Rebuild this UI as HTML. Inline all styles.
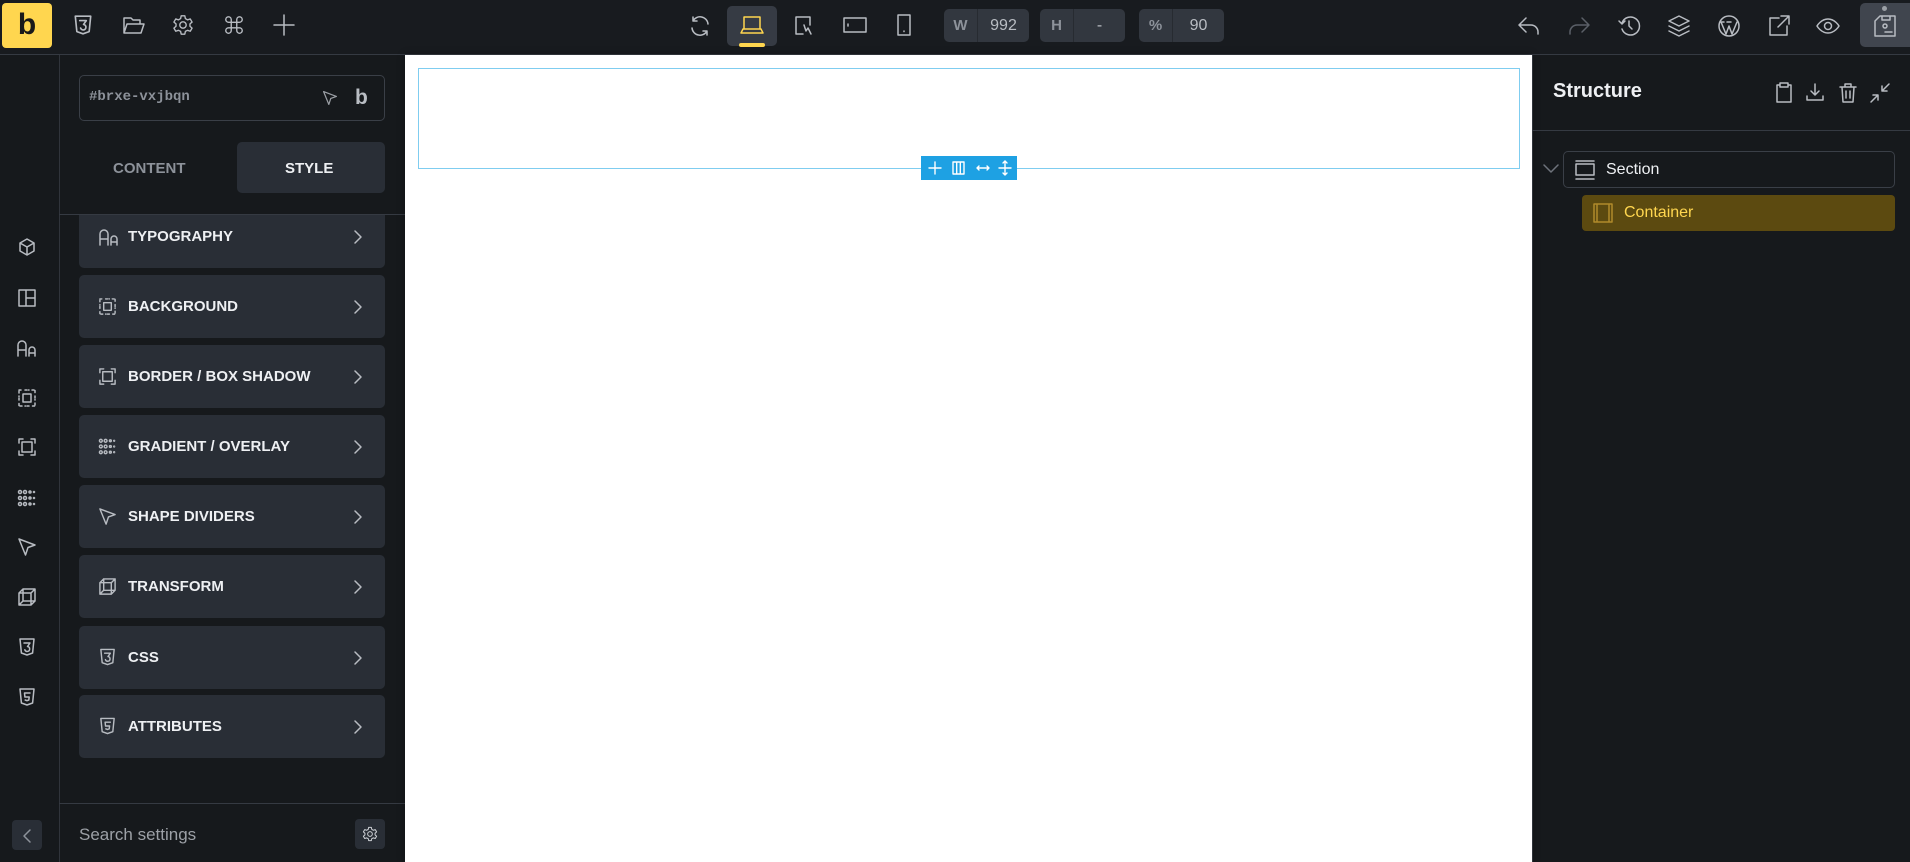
<!DOCTYPE html>
<html><head><meta charset="utf-8"><style>
*{box-sizing:border-box;margin:0;padding:0}
body{width:1910px;height:862px;overflow:hidden;background:#16191c;font-family:"Liberation Sans",sans-serif;position:relative}
.a{position:absolute}
svg.i{position:absolute;fill:none;stroke:#b8bcc2;stroke-width:1.5;stroke-linecap:round;stroke-linejoin:round}
.top{left:0;top:0;width:1910px;height:55px;background:#181b1f;border-bottom:1px solid #353a42}
.item{position:absolute;left:79px;width:306px;height:63px;background:#292e36;border-radius:5px}
.item span{position:absolute;left:49px;top:23px;color:#eef0f3;font-weight:bold;font-size:15px}
.item svg{position:absolute}
.chev{right:22px;top:24px}
.box{position:absolute;background:#32373f;border-radius:5px;height:33px;top:9px}
.box b{position:absolute;left:0;top:0;width:34px;height:33px;border-right:1px solid #272b31;color:#8d929a;font-size:15px;text-align:center;line-height:33px}
.box i{position:absolute;left:34px;right:0;top:0;height:33px;color:#b9bdc3;font-style:normal;font-size:16px;text-align:center;line-height:33px}
</style></head><body>
<svg width="0" height="0" style="position:absolute">
<defs>
<symbol id="css" viewBox="0 0 20 20"><path d="M3 2h14l-1.4 14L10 18l-5.6-2z M7 6h6l-2.5 3.5a2.5 2.5 0 1 1-2.7 3.3"/></symbol>
<symbol id="h5" viewBox="0 0 20 20"><path d="M3 2h14l-1.4 14L10 18l-5.6-2z M13 6H7.5l.4 4h4.3l-.4 3-1.8.7-1.8-.7"/></symbol>
<symbol id="chev" viewBox="0 0 10 16"><path d="M2 2l6 6-6 6"/></symbol>
<symbol id="typo" viewBox="0 0 22 20"><path d="M2 18V7a4 4 0 0 1 8 0v11M2 12h8M13 18v-6a3 3 0 0 1 6 0v6M13 15h6"/></symbol>
<symbol id="bg" viewBox="0 0 20 20"><path d="M6 6h8v8H6z" /><path d="M2 2h3M8 2h4M15 2h3v3M18 8v4M18 15v3h-3M12 18H8M5 18H2v-3M2 12V8M2 5V2" stroke-dasharray="2 1.5"/></symbol>
<symbol id="border" viewBox="0 0 20 20"><path d="M5 5h10v10H5zM2 6V2h4M14 2h4v4M18 14v4h-4M6 18H2v-4"/></symbol>
<symbol id="grad" viewBox="0 0 20 20"><circle cx="3" cy="4" r="1.5"/><circle cx="8" cy="4" r="1.5"/><circle cx="13" cy="4" r="1"/><circle cx="17" cy="4" r=".5"/><circle cx="3" cy="10" r="1.5"/><circle cx="8" cy="10" r="1.5"/><circle cx="13" cy="10" r="1"/><circle cx="17" cy="10" r=".5"/><circle cx="3" cy="16" r="1.5"/><circle cx="8" cy="16" r="1.5"/><circle cx="13" cy="16" r="1"/><circle cx="17" cy="16" r=".5"/></symbol>
<symbol id="ptr" viewBox="0 0 20 20"><path d="M2 2l16 6-7 2.5L8.5 18z"/></symbol>
<symbol id="cube" viewBox="0 0 20 20"><path d="M2 6h12v12H2zM6 2h12v12H6zM2 6l4-4M14 6l4-4M14 18l4-4M2 18l4-4"/></symbol>
<symbol id="box3d" viewBox="0 0 20 20"><path d="M10 2l7 4v8l-7 4-7-4V6zM3 6l7 4 7-4M10 10v8"/></symbol>
<symbol id="layout" viewBox="0 0 20 20"><path d="M2 2h16v16H2zM9 2v16M9 10h9"/></symbol>
</defs></svg>

<div class="a top"></div>
<div class="a" style="left:2px;top:3px;width:50px;height:45px;background:#ffd64f;border-radius:4px;color:#1a1a1a;font-weight:bold;font-size:30px;text-align:center;line-height:44px">b</div>
<svg class="i" style="left:72px;top:14px" width="22" height="22"><use href="#css"/></svg>
<svg class="i" style="left:122px;top:14px" width="24" height="22" viewBox="0 0 24 22"><path d="M2 19V4h7l2 2h7v4M2 19l3-9h17l-3 9z"/></svg>
<svg class="i" style="left:172px;top:14px" width="22" height="22" viewBox="0 0 24 24"><circle cx="12" cy="12" r="3.5"/><path d="M10 2h4l.6 3 2.4 1.4 2.9-1 2 3.4-2.3 2v2.6l2.3 2-2 3.4-2.9-1L14.6 19 14 22h-4l-.6-3L7 17.8l-2.9 1-2-3.4 2.3-2v-2.6l-2.3-2 2-3.4 2.9 1L9.4 5z"/></svg>
<svg class="i" style="left:223px;top:14px" width="22" height="22" viewBox="0 0 24 24"><path d="M9 9h6v6H9zM9 9V6a3 3 0 1 0-3 3zM15 9V6a3 3 0 1 1 3 3zM9 15v3a3 3 0 1 1-3-3zM15 15v3a3 3 0 1 0 3-3z"/></svg>
<svg class="i" style="left:272px;top:13px" width="24" height="24"><path d="M12 2v20M2 12h20"/></svg>

<svg class="i" style="left:688px;top:14px" width="24" height="24" viewBox="0 0 24 24"><path d="M20 10A8 8 0 0 0 5 7M4 14a8 8 0 0 0 15 3M5 3v4h4M19 21v-4h-4"/></svg>
<div class="a" style="left:727px;top:6px;width:50px;height:40px;background:#363b44;border-radius:5px"></div>
<div class="a" style="left:739px;top:43px;width:26px;height:4px;background:#ffd64f;border-radius:2px"></div>
<svg class="i" style="left:740px;top:14px;stroke:#ffd64f" width="24" height="22" viewBox="0 0 24 22"><path d="M4 3h16v12H4zM1 19h22l-2-4H3z"/></svg>
<svg class="i" style="left:793px;top:14px" width="22" height="24" viewBox="0 0 22 24"><path d="M10 20H3V3h14v8M11 11l2 6 2-3 3 6" /></svg>
<svg class="i" style="left:842px;top:15px" width="26" height="20" viewBox="0 0 26 20"><path d="M2 3h22v14H2zM6 9v2"/></svg>
<svg class="i" style="left:896px;top:13px" width="16" height="24" viewBox="0 0 16 24"><path d="M2 2h12v20H2zM8 18v.5"/></svg>
<div class="box" style="left:944px;width:85px"><b>W</b><i>992</i></div>
<div class="box" style="left:1040px;width:85px"><b>H</b><i>-</i></div>
<div class="box" style="left:1139px;width:85px"><b>%</b><i>90</i></div>

<svg class="i" style="left:1517px;top:15px" width="24" height="22" viewBox="0 0 24 22"><path d="M9 3L2 10l7 7M2 10h12a7 7 0 0 1 7 7v2"/></svg>
<svg class="i" style="left:1567px;top:15px;stroke:#5b6068" width="24" height="22" viewBox="0 0 24 22"><path d="M15 3l7 7-7 7M22 10H10a7 7 0 0 0-7 7v2"/></svg>
<svg class="i" style="left:1617px;top:14px" width="24" height="24" viewBox="0 0 24 24"><path d="M5 9a9 9 0 1 1 0 6M2 7l3 3 3-3M12 7v5l3 3"/></svg>
<svg class="i" style="left:1667px;top:14px" width="24" height="24" viewBox="0 0 24 24"><path d="M12 2l10 5-10 5L2 7zM2 12l10 5 10-5M2 17l10 5 10-5"/></svg>
<svg class="i" style="left:1717px;top:14px" width="24" height="24" viewBox="0 0 24 24"><circle cx="12" cy="12" r="10"/><path d="M4 8l5 12 3-8 3 8 5-12M3 8h4M10 8h4"/></svg>
<svg class="i" style="left:1767px;top:14px" width="24" height="24" viewBox="0 0 24 24"><path d="M12 4H3v17h17v-9M14 2h8v8M22 2L11 13"/></svg>
<svg class="i" style="left:1816px;top:16px" width="24" height="20" viewBox="0 0 24 20"><path d="M1 10s4-7 11-7 11 7 11 7-4 7-11 7S1 10 1 10z"/><circle cx="12" cy="10" r="3.5"/></svg>
<div class="a" style="left:1860px;top:3px;width:50px;height:44px;background:#40454e;border-radius:5px 0 0 5px"></div>
<div class="a" style="left:1882px;top:6px;width:5px;height:5px;border-radius:50%;background:#9ca0a6"></div>
<svg class="i" style="left:1873px;top:15px" width="24" height="22" viewBox="0 0 24 22"><path d="M7 1h15v20H2V6zM9 1v4h8V1"/><circle cx="12" cy="11" r="2"/><path d="M12 17h7"/></svg>

<!-- left rail -->
<div class="a" style="left:59px;top:55px;width:1px;height:807px;background:#30343b"></div>
<svg class="i" style="left:17px;top:237px" width="20" height="20"><use href="#box3d"/></svg>
<svg class="i" style="left:17px;top:288px" width="20" height="20"><use href="#layout"/></svg>
<svg class="i" style="left:16px;top:338px" width="22" height="20"><use href="#typo"/></svg>
<svg class="i" style="left:17px;top:388px" width="20" height="20"><use href="#bg"/></svg>
<svg class="i" style="left:17px;top:437px" width="20" height="20"><use href="#border"/></svg>
<svg class="i" style="left:17px;top:488px" width="20" height="20"><use href="#grad"/></svg>
<svg class="i" style="left:17px;top:537px" width="20" height="20"><use href="#ptr"/></svg>
<svg class="i" style="left:17px;top:587px" width="20" height="20"><use href="#cube"/></svg>
<svg class="i" style="left:17px;top:637px" width="20" height="20"><use href="#css"/></svg>
<svg class="i" style="left:17px;top:687px" width="20" height="20"><use href="#h5"/></svg>
<div class="a" style="left:12px;top:820px;width:30px;height:30px;background:#292e36;border-radius:4px"></div>
<svg class="i" style="left:22px;top:828px;stroke:#8d929a" width="10" height="16"><path d="M8 2L2 8l6 6"/></svg>

<!-- settings panel -->
<div class="a" style="left:79px;top:75px;width:306px;height:46px;border:1px solid #3a3f47;border-radius:5px"></div>
<div class="a" style="left:89px;top:89px;color:#8d929a;font-family:'Liberation Mono',monospace;font-weight:bold;font-size:14px">#brxe-vxjbqn</div>
<svg class="i" style="left:322px;top:90px;stroke:#9ca0a6" width="16" height="16" viewBox="0 0 20 20"><path d="M2 2l16 6-7 2.5L8.5 18z"/></svg>
<div class="a" style="left:355px;top:86px;color:#b9bdc3;font-weight:bold;font-size:21px">b</div>
<div class="a" style="left:237px;top:142px;width:148px;height:51px;background:#292e36;border-radius:5px"></div>
<div class="a" style="left:113px;top:160px;color:#8d929a;font-weight:bold;font-size:15px">CONTENT</div>
<div class="a" style="left:285px;top:160px;color:#eef0f3;font-weight:bold;font-size:15px">STYLE</div>
<div class="a" style="left:59px;top:214px;width:346px;height:1px;background:#353a42"></div>
<div class="a" style="left:59px;top:215px;width:346px;height:588px;overflow:hidden">
 <div class="item" style="left:20px;top:-10px"><svg class="i" style="left:19px;top:22px" width="22" height="20"><use href="#typo"/></svg><span>TYPOGRAPHY</span><svg class="i chev" width="10" height="16"><use href="#chev"/></svg></div>
 <div class="item" style="left:20px;top:60px"><svg class="i" style="left:19px;top:22px" width="19" height="19"><use href="#bg"/></svg><span>BACKGROUND</span><svg class="i chev" width="10" height="16"><use href="#chev"/></svg></div>
 <div class="item" style="left:20px;top:130px"><svg class="i" style="left:19px;top:22px" width="19" height="19"><use href="#border"/></svg><span>BORDER / BOX SHADOW</span><svg class="i chev" width="10" height="16"><use href="#chev"/></svg></div>
 <div class="item" style="left:20px;top:200px"><svg class="i" style="left:19px;top:22px" width="19" height="19"><use href="#grad"/></svg><span>GRADIENT / OVERLAY</span><svg class="i chev" width="10" height="16"><use href="#chev"/></svg></div>
 <div class="item" style="left:20px;top:270px"><svg class="i" style="left:19px;top:22px" width="19" height="19"><use href="#ptr"/></svg><span>SHAPE DIVIDERS</span><svg class="i chev" width="10" height="16"><use href="#chev"/></svg></div>
 <div class="item" style="left:20px;top:340px"><svg class="i" style="left:19px;top:22px" width="19" height="19"><use href="#cube"/></svg><span>TRANSFORM</span><svg class="i chev" width="10" height="16"><use href="#chev"/></svg></div>
 <div class="item" style="left:20px;top:411px"><svg class="i" style="left:19px;top:21px" width="19" height="20"><use href="#css"/></svg><span>CSS</span><svg class="i chev" width="10" height="16"><use href="#chev"/></svg></div>
 <div class="item" style="left:20px;top:480px"><svg class="i" style="left:19px;top:21px" width="19" height="20"><use href="#h5"/></svg><span>ATTRIBUTES</span><svg class="i chev" width="10" height="16"><use href="#chev"/></svg></div>
</div>
<div class="a" style="left:59px;top:803px;width:346px;height:1px;background:#353a42"></div>
<div class="a" style="left:79px;top:825px;color:#9ca0a6;font-size:17px">Search settings</div>
<div class="a" style="left:355px;top:819px;width:30px;height:30px;background:#292e36;border-radius:4px"></div>
<svg class="i" style="left:362px;top:826px;stroke:#d0d3d8" width="16" height="16" viewBox="0 0 24 24"><circle cx="12" cy="12" r="3.5"/><path d="M10 2h4l.6 3 2.4 1.4 2.9-1 2 3.4-2.3 2v2.6l2.3 2-2 3.4-2.9-1L14.6 19 14 22h-4l-.6-3L7 17.8l-2.9 1-2-3.4 2.3-2v-2.6l-2.3-2 2-3.4 2.9 1L9.4 5z"/></svg>

<!-- canvas -->
<div class="a" style="left:405px;top:55px;width:1127px;height:807px;background:#fff;box-shadow:0 0 8px rgba(0,0,0,.3)"></div>
<div class="a" style="left:418px;top:68px;width:1102px;height:101px;border:1px solid #7fcdf0"></div>
<div class="a" style="left:921px;top:156px;width:96px;height:24px;background:#1ea1e3"></div>
<svg class="i" style="left:921px;top:156px;stroke:#fff;stroke-width:1.4" width="96" height="24"><path d="M14 6v12M8 12h12M32 6h11v12H32zM35.7 6v12M39.3 6v12M56 12h12M58 10l-2 2 2 2M66 10l2 2-2 2M84 5v14M78 12h12M82 7l2-2 2 2M82 17l2 2 2-2"/></svg>

<!-- right panel -->
<div class="a" style="left:1532px;top:55px;width:1px;height:807px;background:#30343b"></div>
<div class="a" style="left:1553px;top:80px;color:#eef0f3;font-weight:bold;font-size:20px">Structure</div>
<svg class="i" style="left:1775px;top:82px" width="18" height="22" viewBox="0 0 18 22"><path d="M5 3H2v17h14V3h-3M5 1h8v4H5z"/></svg>
<svg class="i" style="left:1805px;top:82px" width="20" height="20" viewBox="0 0 20 20"><path d="M10 2v11M6 9l4 4 4-4M2 14v4h16v-4"/></svg>
<svg class="i" style="left:1839px;top:82px" width="18" height="22" viewBox="0 0 18 22"><path d="M1 5h16M6 5V2h6v3M3 5l1 15h10l1-15M7 9v7M11 9v7"/></svg>
<svg class="i" style="left:1869px;top:82px" width="22" height="22" viewBox="0 0 22 22"><path d="M20 2l-7 7M13 4v5h5M2 20l7-7M4 13h5v5"/></svg>
<div class="a" style="left:1532px;top:130px;width:378px;height:1px;background:#353a42"></div>
<svg class="i" style="left:1543px;top:164px;stroke:#6e737b" width="16" height="10"><path d="M1 1l7 7 7-7"/></svg>
<div class="a" style="left:1563px;top:151px;width:332px;height:37px;border:1px solid #3a3f47;border-radius:5px"></div>
<svg class="i" style="left:1575px;top:160px" width="20" height="20" viewBox="0 0 20 20"><path d="M1 1h18M1 4h18v11H1zM1 19h18"/></svg>
<div class="a" style="left:1606px;top:161px;color:#eef0f3;font-size:16px">Section</div>
<div class="a" style="left:1582px;top:195px;width:313px;height:36px;background:#5c4a10;border-radius:4px"></div>
<svg class="i" style="left:1593px;top:203px;stroke:#b08a2a" width="20" height="20" viewBox="0 0 20 20"><path d="M1 1h18v18H1zM4 1v18M16 1v18" /></svg>
<div class="a" style="left:1624px;top:204px;color:#ffd64f;font-size:16px">Container</div>
</body></html>
